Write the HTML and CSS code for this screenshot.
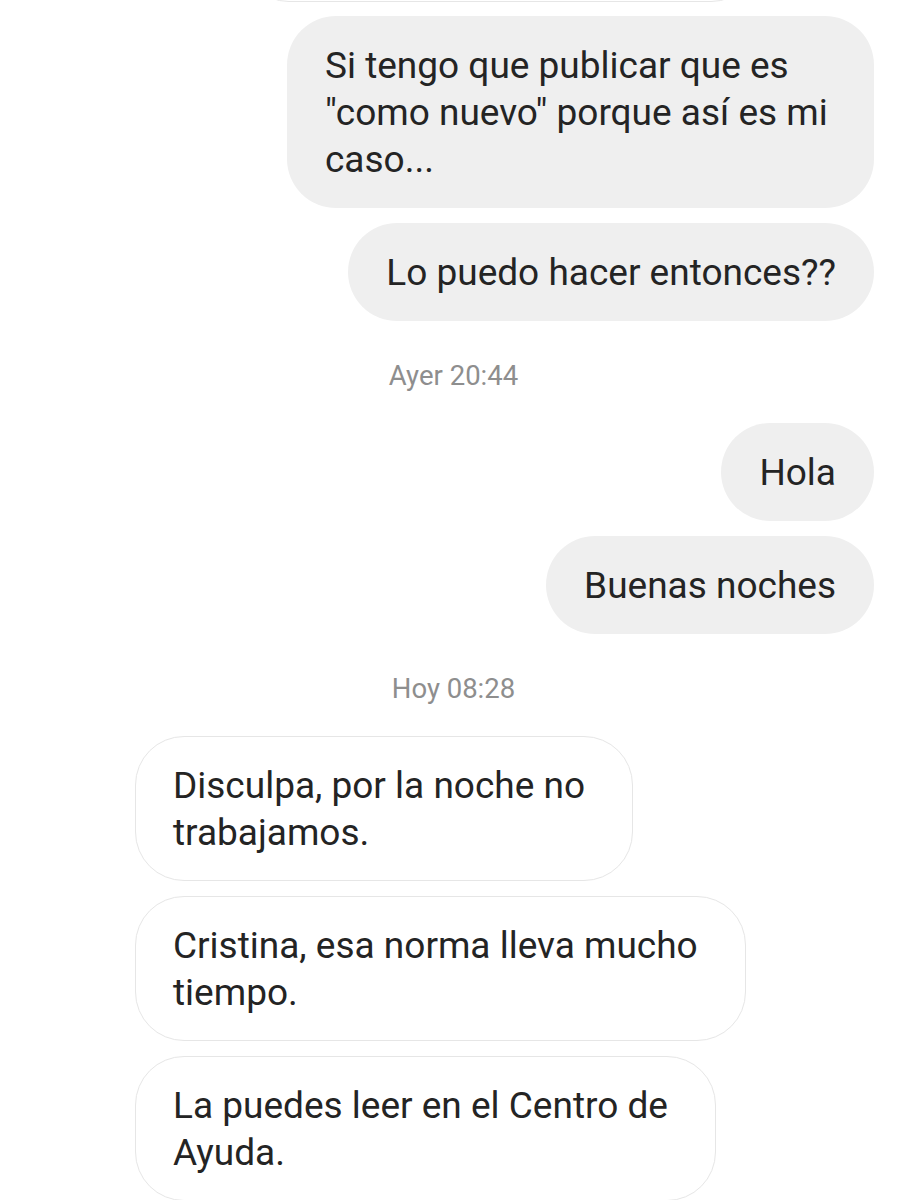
FILE: index.html
```html
<!DOCTYPE html>
<html lang="es">
<head>
    <meta charset="UTF-8">
    <title>Mensajes</title>
    <link rel="stylesheet" href="styles.css">
</head>
<body>
    <div class="chat">
        <div class="bubble received cut"></div>

        <div class="bubble sent wide">Si tengo que publicar que es "como nuevo" porque así es mi caso...</div>
        <div class="bubble sent">Lo puedo hacer entonces??</div>

        <div class="time">Ayer 20:44</div>

        <div class="bubble sent">Hola</div>
        <div class="bubble sent">Buenas noches</div>

        <div class="time">Hoy 08:28</div>

        <div class="bubble received">Disculpa, por la noche no<br>trabajamos.</div>
        <div class="bubble received">Cristina, esa norma lleva mucho<br>tiempo.</div>
        <div class="bubble received">La puedes leer en el Centro de<br>Ayuda.</div>
    </div>
</body>
</html>
```

FILE: styles.css
```css
body {
    margin: 0;
    background-color: #fff;
    font-family: Roboto, "Liberation Sans", sans-serif;
    color: #242424;
}
.chat {
    display: flex;
    flex-direction: column;
    gap: 15px;
    height: 1200px;
    overflow: hidden;
}
.chat > div {
    flex-shrink: 0;
}
.bubble {
    font-size: 37px;
    line-height: 47px;
    padding: 25.5px 38px;
    border-radius: 49px;
    box-sizing: border-box;
}
.sent {
    align-self: flex-end;
    margin-right: 33px;
    background-color: #efefef;
    max-width: 587px;
}
.sent.wide {
    width: 587px;
    margin-top: -1px;
}
.received {
    align-self: flex-start;
    margin-left: 135px;
    padding: 24.5px 47px 24.5px 37px;
    background-color: #fff;
    border: 1.5px solid #e6e6e6;
}
.received.cut {
    margin-top: -98px;
    height: 100px;
    width: 520px;
    margin-left: 240px;
}
.time {
    align-self: center;
    font-size: 27.5px;
    line-height: 32px;
    color: #8e8e8e;
    margin: 24px 0 16px;
}
```
